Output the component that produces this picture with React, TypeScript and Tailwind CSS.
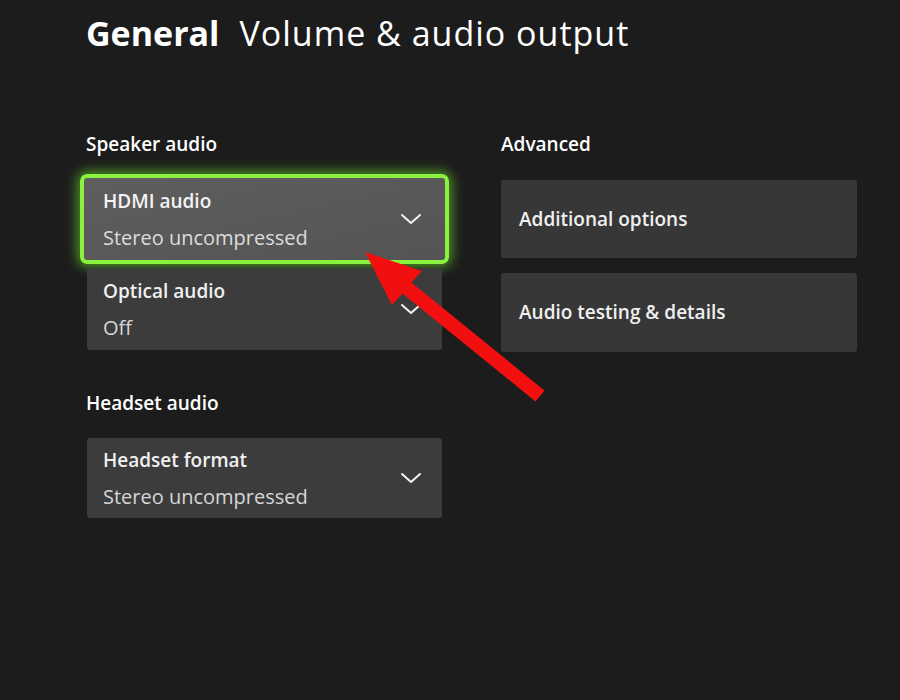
import React from "react";

function Chevron() {
  return (
    <svg width="22" height="12" viewBox="0 0 22 12" fill="none">
      <path d="M2 2 L11 10 L20 2" stroke="#f2f2f2" strokeWidth="2" strokeLinecap="round" strokeLinejoin="round" />
    </svg>
  );
}

type Opcion = { titulo: string; valor: string; activo?: boolean; alto: string };

function Desplegable({ titulo, valor, activo, alto }: Opcion) {
  if (activo) {
    return (
      <div
        className={`-mx-[7px] ${alto} rounded-[7px] border-[4px] border-[#88f23e] bg-gradient-to-br from-[#5e5e5e] to-[#545454] shadow-[0_0_12px_3px_rgba(110,230,40,0.6)] flex items-center pl-[19px] pr-[23px]`}
      >
        <div className="flex-1">
          <div className="text-[19px] leading-[26px] font-semibold text-[#f4f4f4]">{titulo}</div>
          <div className="text-[20px] leading-[26px] mt-[11px] text-[#dcdcdc]">{valor}</div>
        </div>
        <Chevron />
      </div>
    );
  }
  return (
    <div className={`${alto} rounded-[3px] bg-[#3c3c3c] flex items-center pl-[16px] pr-[20px]`}>
      <div className="flex-1">
        <div className="text-[19px] leading-[26px] font-semibold text-[#f0f0f0]">{titulo}</div>
        <div className="text-[20px] leading-[26px] mt-[11px] text-[#d6d6d6]">{valor}</div>
      </div>
      <Chevron />
    </div>
  );
}

function Boton({ texto, alto }: { texto: string; alto: string }) {
  return (
    <div className={`${alto} rounded-[3px] bg-[#373737] flex items-center pl-[18px]`}>
      <span className="text-[19px] font-semibold text-[#f0f0f0]">{texto}</span>
    </div>
  );
}

function Flecha() {
  return (
    <svg className="absolute left-0 top-0 pointer-events-none" width="900" height="700">
      <polygon
        points="365,252 422,271 411.5,282.6 544.5,390.6 535.5,401.4 402.5,293.4 392,305"
        fill="#f20f0f"
      />
    </svg>
  );
}

export default function App() {
  return (
    <div
      className="relative w-[900px] h-[700px] overflow-hidden bg-[#1c1c1c] text-white"
      style={{ fontFamily: '"Open Sans", "Noto Sans", sans-serif' }}
    >
      <div className="pl-[86px] pt-[10px] h-[46px] flex items-baseline gap-[20px] text-[34px] leading-[46px]">
        <span className="font-bold">General</span>
        <span className="tracking-[1px]">Volume &amp; audio output</span>
      </div>

      <div className="flex pl-[87px] mt-[86px] gap-[59px]">
        <div className="w-[355px] flex flex-col">
          <div className="text-[19px] leading-[24px] font-semibold -ml-[1px]">Speaker audio</div>
          <div className="mt-[18px] flex flex-col gap-[4px]">
            <Desplegable titulo="HDMI audio" valor="Stereo uncompressed" activo alto="h-[90px]" />
            <Desplegable titulo="Optical audio" valor="Off" alto="h-[82px]" />
          </div>
          <div className="mt-[41px] text-[19px] leading-[24px] font-semibold -ml-[1px]">Headset audio</div>
          <div className="mt-[23px]">
            <Desplegable titulo="Headset format" valor="Stereo uncompressed" alto="h-[80px]" />
          </div>
        </div>

        <div className="w-[356px] flex flex-col">
          <div className="text-[19px] leading-[24px] font-semibold">Advanced</div>
          <div className="mt-[24px] flex flex-col gap-[15px]">
            <Boton texto="Additional options" alto="h-[78px]" />
            <Boton texto="Audio testing & details" alto="h-[79px]" />
          </div>
        </div>
      </div>

      <Flecha />
    </div>
  );
}
